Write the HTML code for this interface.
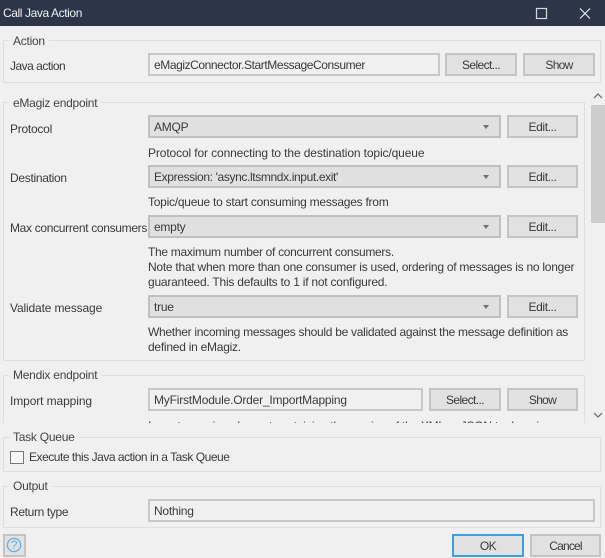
<!DOCTYPE html>
<html>
<head>
<meta charset="utf-8">
<style>
html,body{margin:0;padding:0;width:605px;height:558px;overflow:hidden;background:#f0f0f0}
body{position:relative;font:12px/15px "Liberation Sans",sans-serif;color:#333;letter-spacing:-.25px}
#w{left:0;top:0;width:605px;height:558px;background:#f0f0f0;filter:blur(.35px)}
div{position:absolute;box-sizing:border-box}
.t{white-space:nowrap;height:15px;color:#3a3a3a}
.n{margin-top:1px}
.g{border:1px solid #dfdfdf}
.l{background:#f0f0f0;padding:0 4px;white-space:nowrap;height:15px;color:#444}
.i{background:#f0f0f0;border:2px solid #c8c8c8;height:23px;padding:3px 0 0 4px;white-space:nowrap;color:#3a3a3a}
.s{background:#e0e0e0;border:2px solid #c0c0c0;height:23px;padding:3px 0 0 4px;white-space:nowrap;color:#3a3a3a}
.b{background:#e1e1e1;border:2px solid #c4c4c4;height:23px;text-align:center;padding-top:3px;color:#3a3a3a;letter-spacing:-.5px}
.a{width:0;height:0;border-left:3px solid transparent;border-right:3px solid transparent;border-top:4px solid #707070}
</style>
</head>
<body>
<div id="w">
<div style="left:0;top:0;width:605px;height:26px;background:#2d3548"></div>
<div class="t" style="left:3px;top:6px;color:#eef0f3;letter-spacing:-.4px">Call Java Action</div>
<svg style="position:absolute;left:530px;top:5px" width="70" height="18" viewBox="0 0 70 18"><rect x="6.5" y="3.5" width="10" height="10" fill="none" stroke="#d5d8de" stroke-width="1.2"/><path d="M50 3.5 L60 13.5 M60 3.5 L50 13.5" stroke="#e8eaee" stroke-width="1.2" fill="none"/></svg>

<div class="g" style="left:3px;top:40px;width:598px;height:43px"></div>
<div class="l" style="left:9px;top:34px">Action</div>
<div class="t n" style="left:10px;top:58px;letter-spacing:-.5px">Java action</div>
<div class="i" style="left:148px;top:53px;width:292px;letter-spacing:-.42px">eMagizConnector.StartMessageConsumer</div>
<div class="b" style="left:445px;top:53px;width:72px;letter-spacing:-.6px">Select...</div>
<div class="b" style="left:523px;top:53px;width:72px;letter-spacing:-.7px">Show</div>

<div style="left:0;top:90px;width:605px;height:333px;overflow:hidden">
  <div class="g" style="left:3px;top:12px;width:582px;height:259px"></div>
  <div class="l" style="left:9px;top:6px">eMagiz endpoint</div>
  <div class="t n" style="left:10px;top:31px">Protocol</div>
  <div class="s" style="left:148px;top:25px;width:353px">AMQP</div>
  <div class="a" style="left:483px;top:35px"></div>
  <div class="b" style="left:507px;top:25px;width:71px;letter-spacing:-.4px">Edit...</div>
  <div class="t" style="left:148px;top:56px;letter-spacing:-.12px">Protocol for connecting to the destination topic/queue</div>
  <div class="t n" style="left:10px;top:80px;letter-spacing:-.3px">Destination</div>
  <div class="s" style="left:148px;top:75px;width:353px;letter-spacing:-.37px">Expression: 'async.ltsmndx.input.exit'</div>
  <div class="a" style="left:483px;top:85px"></div>
  <div class="b" style="left:507px;top:75px;width:71px;letter-spacing:-.4px">Edit...</div>
  <div class="t" style="left:148px;top:105px">Topic/queue to start consuming messages from</div>
  <div class="t n" style="left:10px;top:130px;letter-spacing:-.32px">Max concurrent consumers</div>
  <div class="s" style="left:148px;top:125px;width:353px">empty</div>
  <div class="a" style="left:483px;top:135px"></div>
  <div class="b" style="left:507px;top:125px;width:71px;letter-spacing:-.4px">Edit...</div>
  <div class="t" style="left:148px;top:155px;letter-spacing:-.3px">The maximum number of concurrent consumers.</div>
  <div class="t" style="left:148px;top:170px">Note that when more than one consumer is used, ordering of messages is no longer</div>
  <div class="t" style="left:148px;top:185px;letter-spacing:-.23px">guaranteed. This defaults to 1 if not configured.</div>
  <div class="t n" style="left:10px;top:210px;letter-spacing:-.15px">Validate message</div>
  <div class="s" style="left:148px;top:205px;width:353px">true</div>
  <div class="a" style="left:483px;top:215px"></div>
  <div class="b" style="left:507px;top:205px;width:71px;letter-spacing:-.4px">Edit...</div>
  <div class="t" style="left:148px;top:235px;letter-spacing:-.29px">Whether incoming messages should be validated against the message definition as</div>
  <div class="t" style="left:148px;top:250px">defined in eMagiz.</div>

  <div class="g" style="left:3px;top:285px;width:582px;height:80px"></div>
  <div class="l" style="left:9px;top:278px">Mendix endpoint</div>
  <div class="t n" style="left:10px;top:303px;letter-spacing:-.1px">Import mapping</div>
  <div class="i" style="left:148px;top:298px;width:275px;letter-spacing:-.2px">MyFirstModule.Order_ImportMapping</div>
  <div class="b" style="left:429px;top:298px;width:72px;letter-spacing:-.6px">Select...</div>
  <div class="b" style="left:507px;top:298px;width:71px;letter-spacing:-.7px">Show</div>
  <div class="t" style="left:148px;top:329px">Import mapping element containing the version of the XML or JSON to domain</div>
</div>

<div style="left:591px;top:105px;width:14px;height:118px;background:#cdcdcd"></div>
<svg style="position:absolute;left:592px;top:92px" width="12" height="8" viewBox="0 0 12 8"><path d="M2 6 L6 2 L10 6" fill="none" stroke="#666" stroke-width="1.2"/></svg>
<svg style="position:absolute;left:592px;top:411px" width="12" height="8" viewBox="0 0 12 8"><path d="M2 2 L6 6 L10 2" fill="none" stroke="#666" stroke-width="1.2"/></svg>

<div class="g" style="left:3px;top:437px;width:598px;height:35px"></div>
<div class="l" style="left:9px;top:430px">Task Queue</div>
<div style="left:10px;top:451px;width:14px;height:13px;background:#f7f7f7;border:1px solid #777"></div>
<div class="t" style="left:29px;top:450px;letter-spacing:-.47px">Execute this Java action in a Task Queue</div>

<div class="g" style="left:3px;top:486px;width:598px;height:42px"></div>
<div class="l" style="left:9px;top:479px">Output</div>
<div class="t n" style="left:10px;top:504px;letter-spacing:-.35px">Return type</div>
<div class="i" style="left:148px;top:499px;width:447px">Nothing</div>

<div class="b" style="left:3px;top:534px;width:23px;padding:0"></div>
<svg style="position:absolute;left:5px;top:536px" width="18" height="18" viewBox="0 0 18 18"><circle cx="9" cy="9" r="6.6" fill="none" stroke="#5db0ea" stroke-width="1.3"/><text x="9" y="13.2" font-family="Liberation Sans" font-size="12" fill="#5db0ea" text-anchor="middle">?</text></svg>
<div class="b" style="left:452px;top:534px;width:72px;border-color:#3aa0e0">OK</div>
<div class="b" style="left:530px;top:534px;width:71px;letter-spacing:-.8px">Cancel</div>
</div>
</body>
</html>
